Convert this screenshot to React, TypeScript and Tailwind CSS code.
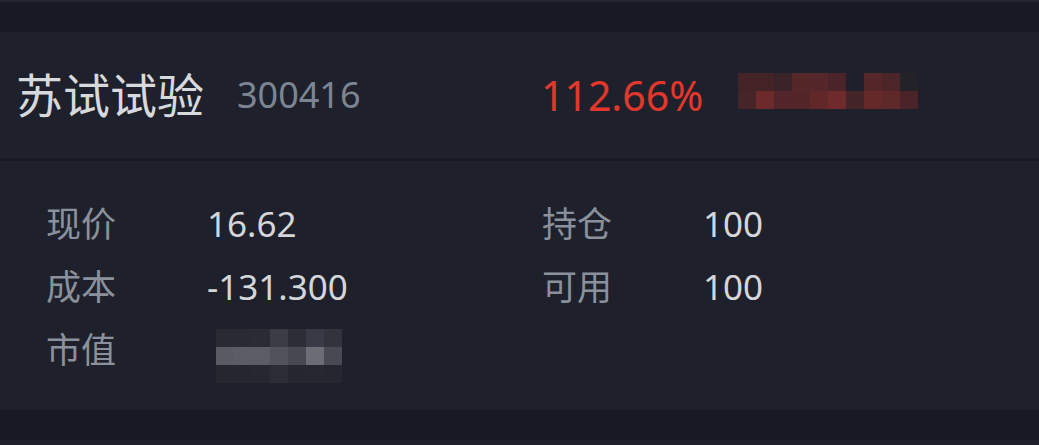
import React from "react";

const font = { fontFamily: '"Noto Sans", "Noto Sans CJK SC", sans-serif' };

const redRows = [
  ["bg-[#432326]", "bg-[#442327]", "bg-[#3a2328]", "bg-[#562729]", "bg-[#56272a]", "bg-[#4a2429]", "bg-[#1e212b]", "bg-[#56272a]", "bg-[#4c2529]", "bg-[#242229]"],
  ["bg-[#472428]", "bg-[#6c2a2b]", "bg-[#512529]", "bg-[#532529]", "bg-[#622829]", "bg-[#6f2a2b]", "bg-[#432428]", "bg-[#662929]", "bg-[#5f2829]", "bg-[#4a2428]"],
];

const grayRows = [
  ["bg-[#282b34]", "bg-[#282b34]", "bg-[#292c35]", "bg-[#3a3d46]", "bg-[#2b2e37]", "bg-[#383b45]", "bg-[#31343d]"],
  ["bg-[#585b63]", "bg-[#5a5d65]", "bg-[#5a5d65]", "bg-[#50535b]", "bg-[#464952]", "bg-[#6a6d74]", "bg-[#474a53]"],
  ["bg-[#242730]", "bg-[#242730]", "bg-[#252831]", "bg-[#2a2d36]", "bg-[#242730]", "bg-[#252831]", "bg-[#242730]"],
];

const Mosaic = ({ rows }: { rows: string[][] }) => (
  <div className="flex flex-col">
    {rows.map((row, i) => (
      <div key={i} className="flex">
        {row.map((c, j) => (
          <div key={j} className={`w-[18px] h-[18px] ${c}`} />
        ))}
      </div>
    ))}
  </div>
);

const Cell = ({ label, children }: { label: string; children: React.ReactNode }) => (
  <div className="flex items-center h-[63px]">
    <div className="w-[161px] text-[35px] leading-none text-[#8b919c]">{label}</div>
    <div className="text-[35px] leading-none text-[#d4d6da]">{children}</div>
  </div>
);

export default function App() {
  return (
    <div className="w-[1039px] h-[445px] bg-[#171a25] flex flex-col overflow-hidden" style={font}>
      <div className="h-[2px] bg-[#22252f]" />
      <div className="h-[30px]" />
      <div className="bg-[#1e212b]">
        <div className="h-[126px] flex items-center pl-[16px]">
          <div className="w-[525px] flex items-center">
            <span className="text-[47px] leading-none text-[#d8d9dc]">苏试试验</span>
            <span className="ml-[33px] text-[36px] leading-none text-[#7d8593]">300416</span>
          </div>
          <span className="text-[41px] leading-none text-[#e3372c]">112.66%</span>
          <div className="ml-[35px] -mt-[8px]">
            <Mosaic rows={redRows} />
          </div>
        </div>
        <div className="h-[3px] bg-[#171a24]" />
        <div className="h-[249px] pt-[31px] pl-[46px] grid grid-cols-[496px_1fr] content-start">
          <Cell label="现价">16.62</Cell>
          <Cell label="持仓">100</Cell>
          <Cell label="成本">-131.300</Cell>
          <Cell label="可用">100</Cell>
          <div className="flex items-center h-[63px]">
            <div className="w-[170px] text-[35px] leading-none text-[#8b919c]">市值</div>
            <div className="mt-[12px]">
              <Mosaic rows={grayRows} />
            </div>
          </div>
        </div>
      </div>
      <div className="h-[30px]" />
      <div className="h-[5px] bg-[#1e212b]" />
    </div>
  );
}
